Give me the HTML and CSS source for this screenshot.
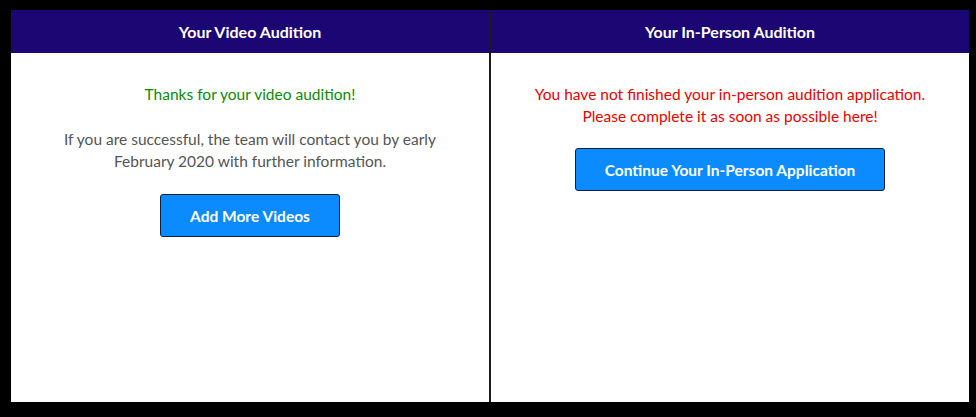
FILE: index.html
```html
<!DOCTYPE html>
<html lang="en">
<head>
  <meta charset="UTF-8" />
  <meta name="viewport" content="width=device-width, initial-scale=1.0"/>
  <title>Your Auditions</title>
  <link rel="stylesheet" href="styles.css">
</head>
<body>
  <div class="board">
    <!-- Video audition -->
    <section class="panel">
      <div class="panel-head">Your Video Audition</div>
      <div class="panel-body">
        <p class="note success">Thanks for your video audition!</p>
        <p class="note info">If you are successful, the team will contact you by early February 2020 with further information.</p>
        <a href="#" class="btn">Add More Videos</a>
      </div>
    </section>
    <!-- In-person audition -->
    <section class="panel">
      <div class="panel-head">Your In-Person Audition</div>
      <div class="panel-body">
        <p class="note warning">You have not finished your in-person audition application.<br>Please complete it as soon as possible here!</p>
        <a href="#" class="btn">Continue Your In-Person Application</a>
      </div>
    </section>
  </div>
</body>
</html>
```

FILE: styles.css
```css
/* Reset */
* { margin: 0; padding: 0; box-sizing: border-box; }
html, body { height: 100%; }
body {
  background: #000;
  font-family: Lato, "Noto Sans", sans-serif;
}
/* Board */
.board {
  display: flex;
  gap: 2px;
  height: 392px;
  margin: 10px 7px 0 11px;
  background: #1a1a1a;
}
.panel {
  flex: 1;
  display: flex;
  flex-direction: column;
  background: #fff;
}
.panel-head {
  height: 43px;
  display: flex;
  align-items: center;
  justify-content: center;
  background: #1c0674;
  color: #fff;
  font-size: 16px;
  font-weight: bold;
}
.panel-body {
  flex: 1;
  display: flex;
  flex-direction: column;
  align-items: center;
  padding: 30px 30px 0;
  text-align: center;
}
/* Messages */
.note {
  font-size: 15.5px;
  line-height: 22px;
  margin-bottom: 22px;
}
.success { color: #0a8a0a; margin-bottom: 23px; }
.info { color: #555; }
.warning { color: #e80000; margin-bottom: 21px; }
/* Button */
.btn {
  display: inline-flex;
  align-items: center;
  height: 43px;
  padding: 0 29px;
  background: #0b8bff;
  border: 1px solid #0d2040;
  border-radius: 3px;
  color: #fff;
  font-size: 15.5px;
  font-weight: bold;
  text-decoration: none;
}
.btn:hover { background: #0a7ce6; }
```
